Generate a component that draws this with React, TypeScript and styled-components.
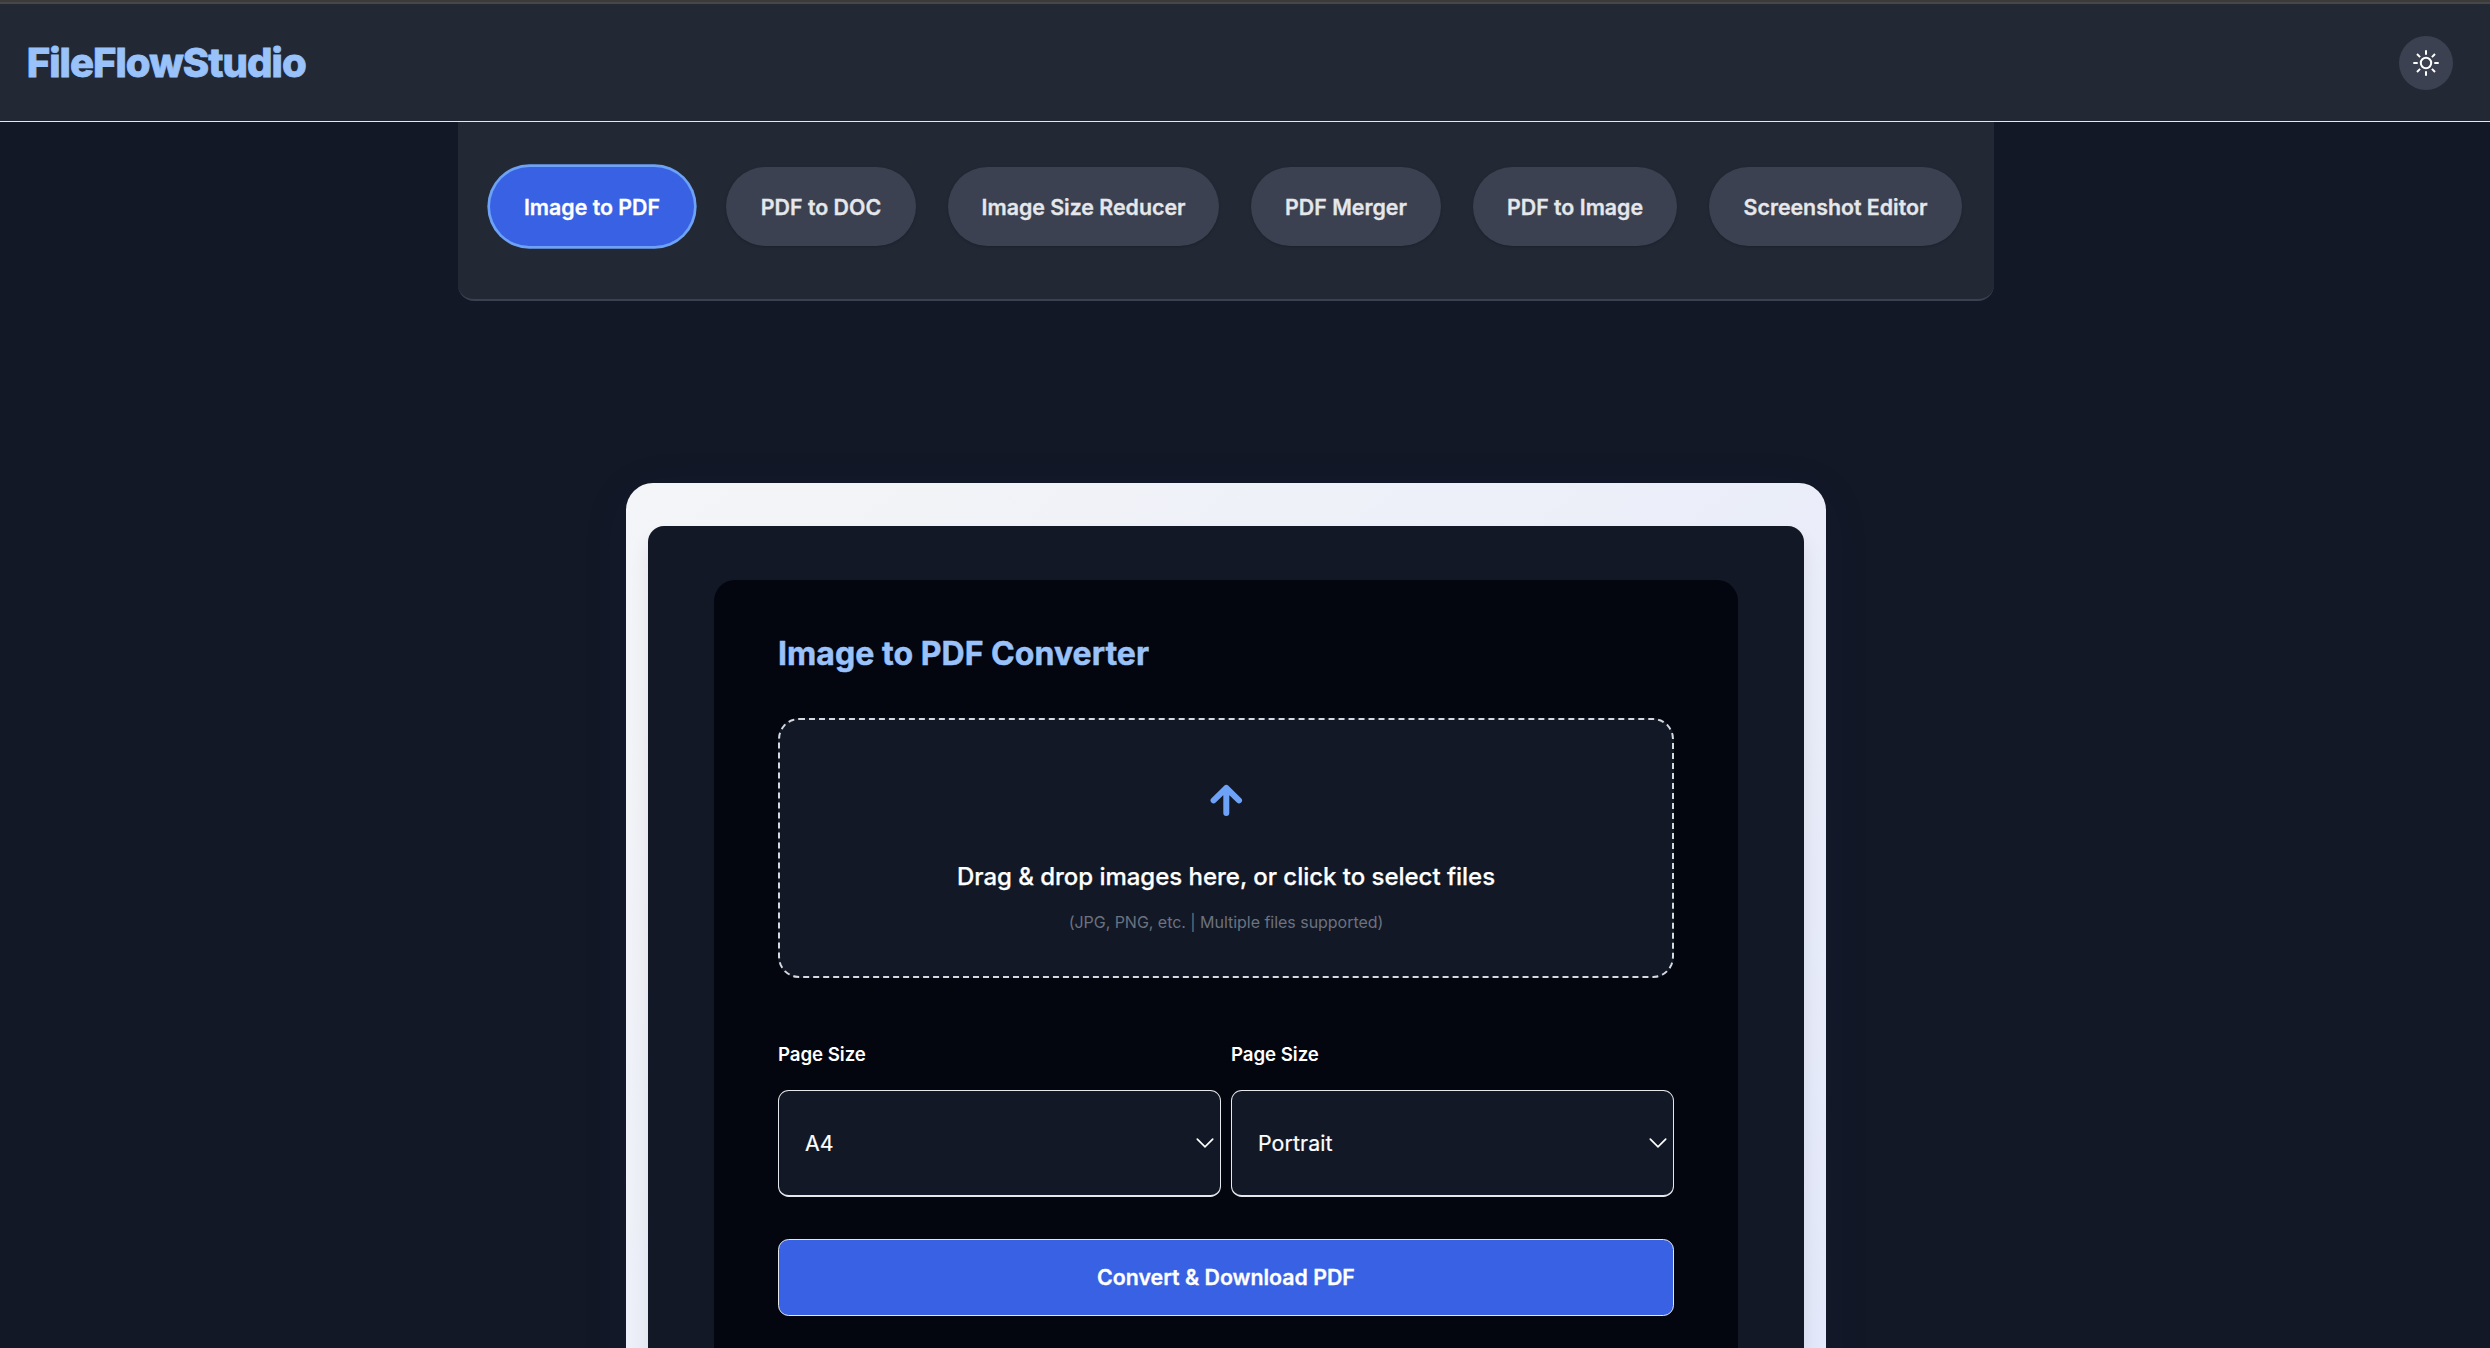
import React, { useState } from "react";
import styled, { createGlobalStyle, css } from "styled-components";

const GlobalStyle = createGlobalStyle`
  *, *::before, *::after { box-sizing: border-box; }
  html, body { margin: 0; height: 100%; overflow: hidden; background: #121825; }
  body { font-family: Inter, "Liberation Sans", sans-serif; color: #fff; -webkit-font-smoothing: antialiased; }
  #root { height: 100%; }
  button { font-family: inherit; cursor: pointer; }
`;

const Page = styled.div`
  display: flex;
  flex-direction: column;
  height: 1348px;
  overflow: hidden;
  background: #121825;
`;

const TopStrip = styled.div`
  flex: none;
  height: 4px;
  background: #474747;
  border-top: 2px solid #3b3b3b;
`;

const Header = styled.header`
  flex: none;
  display: flex;
  align-items: center;
  justify-content: space-between;
  height: 118px;
  padding: 0 37px 0 26.7px;
  background: #222935;
  border-bottom: 1px solid #e5e7eb;
`;

const Logo = styled.h1`
  margin: 0;
  font-size: 40px;
  line-height: 48px;
  font-weight: 800;
  letter-spacing: -0.95px;
  color: #9ac2fa;
  -webkit-text-stroke: 0.8px #9ac2fa;
`;

const ThemeButton = styled.button`
  display: flex;
  align-items: center;
  justify-content: center;
  width: 54px;
  height: 54px;
  padding: 0;
  border: 0;
  border-radius: 50%;
  background: #3b4150;
  color: #fff;
`;

const Main = styled.main`
  flex: 1;
  display: flex;
  flex-direction: column;
  align-items: center;
  min-height: 0;
  padding-right: 38px;
`;

const Nav = styled.nav`
  flex: none;
  display: flex;
  justify-content: space-between;
  align-items: flex-start;
  width: 1536px;
  height: 179px;
  padding: 45px 32px 0;
  background: #222935;
  border-bottom: 2px solid #3b4150;
  border-radius: 0 0 16px 16px;
`;

const Tab = styled.button<{ $active: boolean; $width: number }>`
  width: ${(p) => p.$width}px;
  height: 79px;
  padding: 0;
  border: 0;
  border-radius: 40px;
  background: #3b4150;
  color: #e5e7eb;
  font-size: 21.33px;
  font-weight: 600;
  white-space: nowrap;
  -webkit-text-stroke: 0.3px currentColor;
  box-shadow: 0 1px 3px rgba(0, 0, 0, 0.2);
  ${(p) =>
    p.$active &&
    css`
      background: #3862e3;
      color: #fff;
      box-shadow: 0 0 0 2.67px #6ea2f6;
    `}
`;

const Frame = styled.section`
  flex: none;
  width: 1200px;
  height: 1300px;
  margin-top: 182px;
  padding: 43px 22px;
  border-radius: 27px;
  background: linear-gradient(135deg, #f4f5f7 0%, #e0e6fb 100%);
  box-shadow: 0 10px 50px rgba(60, 50, 190, 0.08);
`;

const Panel = styled.div`
  height: 100%;
  padding: 54px 66px;
  border-radius: 16px;
  background: #121825;
  box-shadow: 0 13px 20px rgba(0, 0, 0, 0.08);
`;

const Card = styled.div`
  display: flex;
  flex-direction: column;
  height: 100%;
  padding: 53px 64px;
  border-radius: 21px;
  background: #03050f;
`;

const Title = styled.h2`
  margin: 0 0 43px;
  font-size: 32px;
  line-height: 42px;
  font-weight: 700;
  letter-spacing: 0.05px;
  color: #9ac2fa;
  -webkit-text-stroke: 0.5px #9ac2fa;
`;

const DropZone = styled.div`
  flex: none;
  display: flex;
  flex-direction: column;
  align-items: center;
  height: 260px;
  padding-top: 56px;
  border: 2px dashed #d5d9e0;
  border-radius: 21px;
  background: #121825;
`;

const DropText = styled.p`
  margin: 35px 0 0;
  font-size: 24px;
  line-height: 36px;
  font-weight: 500;
  letter-spacing: -0.03px;
  -webkit-text-stroke: 0.25px currentColor;
`;

const DropHint = styled.p`
  margin: 15px 0 0;
  font-size: 16px;
  line-height: 24px;
  letter-spacing: -0.03px;
  color: #6b7280;
`;

const Options = styled.div`
  display: grid;
  grid-template-columns: 1fr 1fr;
  gap: 10px;
  margin-top: 63px;
`;

const Field = styled.div`
  display: flex;
  flex-direction: column;
`;

const Label = styled.span`
  margin-bottom: 21px;
  font-size: 18.67px;
  line-height: 28px;
  font-weight: 600;
  letter-spacing: -0.05px;
`;

const SelectBox = styled.button`
  display: flex;
  align-items: center;
  justify-content: space-between;
  height: 107px;
  padding: 0 6px 0 26px;
  border: 1px solid #e5e7eb;
  border-bottom-width: 2px;
  border-radius: 10.67px;
  background: #121825;
  color: #fff;
  font-size: 21.33px;
  letter-spacing: 0.1px;
  -webkit-text-stroke: 0.2px currentColor;
`;

const Submit = styled.button`
  flex: none;
  height: 77px;
  margin-top: 42px;
  padding: 0 0 2px;
  border: 1px solid #e5e7eb;
  border-radius: 10.67px;
  background: #3862e3;
  color: #fff;
  font-size: 21.33px;
  font-weight: 600;
  -webkit-text-stroke: 0.3px currentColor;
`;

const SunIcon = () => (
  <svg width="26" height="26" viewBox="0 0 26 26" fill="none" stroke="currentColor" strokeWidth="2">
    <circle cx="13" cy="13" r="5.2" />
    <path d="M13 0.3v4.4M13 21.3v4.4M0.3 13h4.4M21.3 13h4.4M4 4l3.1 3.1M18.9 18.9L22 22M22 4l-3.1 3.1M7.1 18.9L4 22" />
  </svg>
);

const ArrowUpIcon = () => (
  <svg
    width="48"
    height="48"
    viewBox="0 0 48 48"
    fill="none"
    stroke="#6ea2f6"
    strokeWidth="6"
    strokeLinecap="round"
    strokeLinejoin="round"
  >
    <path d="M24.3 37V12M11.6 24.3L24.3 12L37 24.3" />
  </svg>
);

const ChevronIcon = () => (
  <svg width="18" height="12" viewBox="0 0 18 12" fill="none" stroke="currentColor" strokeWidth="1.7" strokeLinecap="round">
    <path d="M1.3 2.2L9 9.9l7.7-7.7" />
  </svg>
);

const tabs = [
  { label: "Image to PDF", width: 204 },
  { label: "PDF to DOC", width: 190 },
  { label: "Image Size Reducer", width: 271 },
  { label: "PDF Merger", width: 190 },
  { label: "PDF to Image", width: 204 },
  { label: "Screenshot Editor", width: 253 },
];

export default function App() {
  const [active, setActive] = useState("Image to PDF");
  return (
    <>
      <GlobalStyle />
      <Page>
        <TopStrip />
        <Header>
          <Logo>FileFlowStudio</Logo>
          <ThemeButton aria-label="Toggle theme">
            <SunIcon />
          </ThemeButton>
        </Header>
        <Main>
          <Nav>
            {tabs.map((tab) => (
              <Tab
                key={tab.label}
                $width={tab.width}
                $active={tab.label === active}
                onClick={() => setActive(tab.label)}
              >
                {tab.label}
              </Tab>
            ))}
          </Nav>
          <Frame>
            <Panel>
              <Card>
                <Title>Image to PDF Converter</Title>
                <DropZone>
                  <ArrowUpIcon />
                  <DropText>Drag &amp; drop images here, or click to select files</DropText>
                  <DropHint>(JPG, PNG, etc. | Multiple files supported)</DropHint>
                </DropZone>
                <Options>
                  <Field>
                    <Label>Page Size</Label>
                    <SelectBox>
                      A4
                      <ChevronIcon />
                    </SelectBox>
                  </Field>
                  <Field>
                    <Label>Page Size</Label>
                    <SelectBox>
                      Portrait
                      <ChevronIcon />
                    </SelectBox>
                  </Field>
                </Options>
                <Submit>Convert &amp; Download PDF</Submit>
              </Card>
            </Panel>
          </Frame>
        </Main>
      </Page>
    </>
  );
}
